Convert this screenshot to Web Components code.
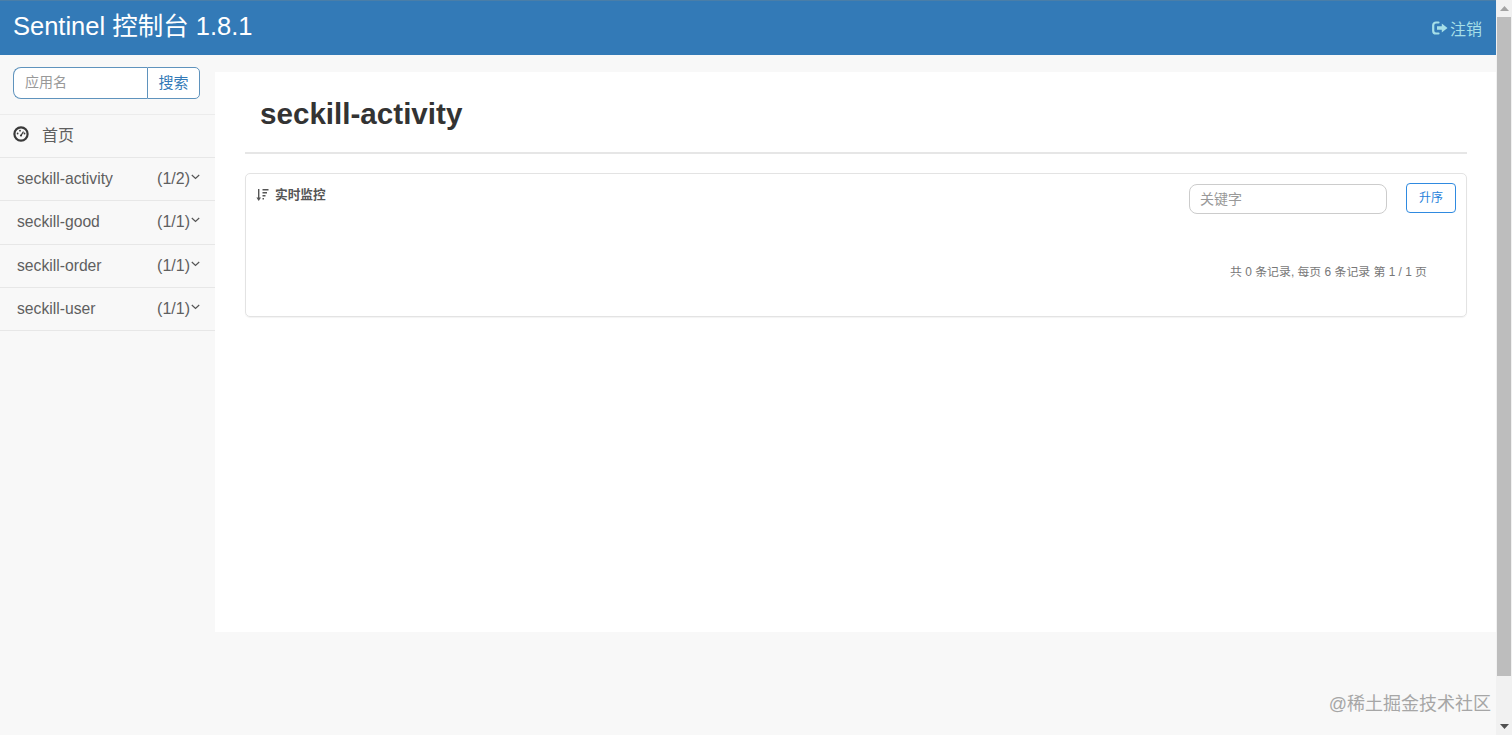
<!DOCTYPE html>
<html lang="zh">
<head>
<meta charset="utf-8">
<title>Sentinel</title>
<style>
  html, body { margin: 0; height: 735px; overflow: hidden; background: #f8f8f8; }
  body { font-family: "Liberation Sans", "Noto Sans CJK SC", sans-serif; color: #333; }
</style>
</head>
<body>
<app-shell>
  <top-bar slot="top"></top-bar>
  <side-nav slot="side">
    <nav-app name="seckill-activity" count="(1/2)"></nav-app>
    <nav-app name="seckill-good" count="(1/1)"></nav-app>
    <nav-app name="seckill-order" count="(1/1)"></nav-app>
    <nav-app name="seckill-user" count="(1/1)"></nav-app>
  </side-nav>
  <monitor-page slot="main" title-text="seckill-activity"></monitor-page>
</app-shell>

<script>
const FONT = `"Liberation Sans", "Noto Sans CJK SC", sans-serif`;

class AppShell extends HTMLElement {
  constructor() {
    super();
    this.attachShadow({ mode: 'open' }).innerHTML = `
      <style>
        :host { display: flex; height: 735px; position: relative; font-family: ${FONT}; }
        .page { flex: 1; min-width: 0; display: flex; flex-direction: column; }
        .body { flex: 1; display: flex; align-items: flex-start; }
        .bar { width: 16px; flex: none; background: #f1f1f1; display: flex; flex-direction: column; align-items: center; }
        .arrow { height: 17px; flex: none; display: flex; align-items: center; justify-content: center; }
        .thumb { width: 14px; height: 659px; background: #bdbdbd; flex: none; }
        .track { flex: 1; }
        .mark { position: absolute; right: 21px; top: 692px; font-size: 18px; line-height: 24px; color: #a6a6a6; }
      </style>
      <div class="page">
        <slot name="top"></slot>
        <div class="body">
          <slot name="side"></slot>
          <slot name="main"></slot>
        </div>
      </div>
      <div class="bar">
        <div class="arrow"><svg width="9" height="5" viewBox="0 0 9 5"><path d="M4.5 0L9 5H0z" fill="#a3a3a3"/></svg></div>
        <div class="thumb"></div>
        <div class="track"></div>
        <div class="arrow"><svg width="9" height="5" viewBox="0 0 9 5"><path d="M0 0h9L4.500 5z" fill="#505050"/></svg></div>
      </div>
      <div class="mark">@稀土掘金技术社区</div>
    `;
  }
}

class TopBar extends HTMLElement {
  constructor() {
    super();
    this.attachShadow({ mode: 'open' }).innerHTML = `
      <style>
        :host { display: flex; align-items: center; justify-content: space-between; height: 54px; box-sizing: content-box;
                border-top: 1px solid #4a7ea8; background: #337ab7; padding: 0 14px 0 13px; }
        .brand { color: #fff; font-size: 25.500px; line-height: 50px; margin-bottom: 4px; }
        .out { color: #a6dfe8; font-size: 16px; display: flex; align-items: center; gap: 2px; margin-top: -1px; }
        svg { display: block; }
      </style>
      <div class="brand">Sentinel 控制台 1.8.1</div>
      <div class="out">
        <svg width="16" height="14" viewBox="0 0 16 14">
          <path d="M6.500 1.500H4A2.800 2.800 0 0 0 1.200 4.300v5.400A2.800 2.800 0 0 0 4 12.500h2.500" fill="none" stroke="#a6dfe8" stroke-width="2.200" stroke-linecap="round"/>
          <path d="M5 5.300h4.800V2.500L15.500 7l-5.700 4.500V8.700H5z" fill="#a6dfe8"/>
        </svg>
        <span>注销</span>
      </div>
    `;
  }
}

class SideNav extends HTMLElement {
  constructor() {
    super();
    this.attachShadow({ mode: 'open' }).innerHTML = `
      <style>
        :host { display: block; width: 215px; flex: none; background: #f8f8f8; color: #555; }
        form { display: flex; margin: 12px 15px 15px 13px; height: 32px; box-sizing: border-box; }
        .field { flex: 1; min-width: 0; box-sizing: border-box; border: 1px solid #5f93bd; border-right: 0; border-radius: 8px 0 0 8px;
                 background: #fff; padding: 0 11px; font-size: 14px; line-height: 28px; color: #999; }
        .btn { width: 53px; box-sizing: border-box; border: 1px solid #5f93bd; border-radius: 0 5px 5px 0; background: #fff; color: #337ab7;
               font-size: 15px; line-height: 30px; text-align: center; }
        .home { display: flex; align-items: center; height: 39px; padding: 0 0 3px 13px; gap: 13px; font-size: 16px; color: #5f5f5f;
                border-top: 1px solid #ececec; border-bottom: 1px solid #e7e7e7; box-sizing: content-box; }
        .home svg { display: block; margin-top: -2px; }
        .home span { margin-top: -2px; }
      </style>
      <form>
        <div class="field">应用名</div>
        <div class="btn">搜索</div>
      </form>
      <div class="home">
        <svg width="16" height="16" viewBox="0 0 16 16">
          <circle cx="8" cy="8" r="6.600" fill="none" stroke="#3a3a3a" stroke-width="2.200"/>
          <path d="M8 9.500L10.200 6" stroke="#3a3a3a" stroke-width="1.300" stroke-linecap="round"/>
          <circle cx="8" cy="9.500" r="1.100" fill="#3a3a3a"/>
          <circle cx="4.600" cy="7.500" r=".9" fill="#3a3a3a"/>
          <circle cx="7" cy="4.700" r=".9" fill="#3a3a3a"/>
          <circle cx="11.500" cy="7.500" r=".9" fill="#3a3a3a"/>
        </svg>
        <span>首页</span>
      </div>
      <slot></slot>
    `;
  }
}

class NavApp extends HTMLElement {
  constructor() {
    super();
    this.attachShadow({ mode: 'open' });
  }

  connectedCallback() {
    this.shadowRoot.innerHTML = `
      <style>
        :host { display: flex; align-items: center; height: 42.300px; padding: 0 15px 0 17px; border-bottom: 1px solid #e7e7e7;
                font-size: 16px; color: #5f5f5f; }
        .name { flex: 1; font-size: 15.700px; }
        .chev { align-self: flex-start; margin: 16px 0 0 1px; display: block; }
      </style>
      <span class="name">${this.getAttribute('name')}</span>
      <span>${this.getAttribute('count')}</span>
      <svg class="chev" width="9" height="6" viewBox="0 0 9 6"><path d="M.8 1l3.700 3.500L8.200 1" fill="none" stroke="#555" stroke-width="1.200"/></svg>
    `;
  }
}

class MonitorPage extends HTMLElement {
  constructor() {
    super();
    this.attachShadow({ mode: 'open' });
  }

  connectedCallback() {
    this.shadowRoot.innerHTML = `
      <style>
        :host { display: block; flex: 1; min-width: 0; height: 560px; margin-top: 17px; background: #fff; padding: 0 29px 0 30px; box-sizing: border-box; }
        h1 { margin: 0; padding: 22px 0 0 15px; height: 82px; box-sizing: border-box; border-bottom: 2px solid #e6e6e6;
             font-size: 29.600px; line-height: 40px; font-weight: 700; color: #333; }
        .card { margin-top: 19px; height: 144px; box-sizing: border-box; border: 1px solid #e3e3e3; border-radius: 5px; padding: 9px 10px 0 10px;
                box-shadow: 0 1px 1px rgba(0,0,0,.05); }
        .head { display: flex; align-items: flex-start; }
        .label { display: flex; align-items: center; gap: 6px; font-size: 12.700px; font-weight: 700; color: #555; line-height: 20px; flex: 1; margin-top: 2px; }
        .kw { width: 198px; height: 30px; box-sizing: border-box; border: 1px solid #ccc; border-radius: 8px; padding: 0 10px; margin-top: 1px;
              font-size: 14px; line-height: 28px; color: #999; }
        .sort { width: 50px; height: 30px; box-sizing: border-box; border: 1px solid #2f8ae0; border-radius: 4px; margin-left: 19px;
                font-size: 12px; line-height: 29px; text-align: center; color: #1f7fdb; }
        .pager { margin: 49px 29px 0 0; text-align: right; font-size: 11.900px; line-height: 18px; color: #777; }
        svg { display: block; }
      </style>
      <h1>${this.getAttribute('title-text')}</h1>
      <div class="card">
        <div class="head">
          <div class="label">
            <svg width="13" height="14" viewBox="0 0 13 14">
              <path d="M2.700 1v10" stroke="#555" stroke-width="1.400"/>
              <path d="M.4 9.500h4.600L2.700 13z" fill="#555"/>
              <path d="M6.500 1.700h6M6.500 4.700h4.500M6.500 7.700h3M6.500 10.700h1.500" stroke="#555" stroke-width="1.400"/>
            </svg>
            <span>实时监控</span>
          </div>
          <div class="kw">关键字</div>
          <div class="sort">升序</div>
        </div>
        <div class="pager">共 0 条记录, 每页 6 条记录 第 1 / 1 页</div>
      </div>
    `;
  }
}

customElements.define('app-shell', AppShell);
customElements.define('top-bar', TopBar);
customElements.define('side-nav', SideNav);
customElements.define('nav-app', NavApp);
customElements.define('monitor-page', MonitorPage);
</script>
</body>
</html>
